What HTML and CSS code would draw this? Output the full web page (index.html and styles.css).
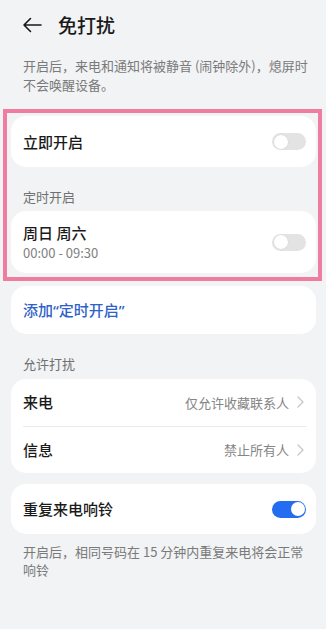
FILE: index.html
```html
<!DOCTYPE html>
<html lang="zh-CN">
<head>
<meta charset="utf-8">
<title>免打扰</title>
<link rel="stylesheet" href="styles.css">
</head>
<body>
<div class="page">
  <header class="header">
    <svg class="back" width="20" height="16" viewBox="0 0 20 16"><path d="M19 8H2M8.5 1.5L2 8l6.5 6.5" fill="none" stroke="#1a1a1a" stroke-width="1.6" stroke-linecap="round" stroke-linejoin="round"/></svg>
    <h1 class="title">免打扰</h1>
  </header>
  <p class="desc">开启后，来电和通知将被静音 (闹钟除外)，熄屏时不会唤醒设备。</p>

  <section class="highlight">
    <div class="card row row-single">
      <span class="row-title">立即开启</span>
      <span class="toggle"></span>
    </div>
    <div class="label">定时开启</div>
    <div class="card row row-double">
      <div class="row-text">
        <span class="row-title">周日 周六</span>
        <span class="row-sub">00:00 - 09:30</span>
      </div>
      <span class="toggle"></span>
    </div>
  </section>

  <div class="card row row-link">
    <span class="link">添加“定时开启”</span>
  </div>

  <div class="label">允许打扰</div>
  <div class="card list">
    <div class="row row-item">
      <span class="row-title">来电</span>
      <span class="value">仅允许收藏联系人<svg class="chev" width="7" height="12" viewBox="0 0 7 12"><path d="M1 1l5 5-5 5" fill="none" stroke="#c4c4c4" stroke-width="1.2" stroke-linecap="round" stroke-linejoin="round"/></svg></span>
    </div>
    <div class="divider"></div>
    <div class="row row-item">
      <span class="row-title">信息</span>
      <span class="value">禁止所有人<svg class="chev" width="7" height="12" viewBox="0 0 7 12"><path d="M1 1l5 5-5 5" fill="none" stroke="#c4c4c4" stroke-width="1.2" stroke-linecap="round" stroke-linejoin="round"/></svg></span>
    </div>
  </div>

  <div class="card row row-repeat">
    <span class="row-title">重复来电响铃</span>
    <span class="toggle on"></span>
  </div>
  <p class="note">开启后，相同号码在 15 分钟内重复来电将会正常响铃</p>
</div>
</body>
</html>
```
FILE: styles.css
```css
* { box-sizing: border-box; }
html, body {
  margin: 0;
  padding: 0;
  background: #f1f3f5;
}
body {
  font-family: "Noto Sans CJK SC", "Noto Sans", sans-serif;
  color: #1a1a1a;
  width: 326px;
  height: 629px;
  overflow: hidden;
}
.page {
  display: flex;
  flex-direction: column;
}
.header {
  height: 50px;
  display: flex;
  align-items: center;
  padding-left: 22px;
}
.back { display: block; }
.title {
  margin: 0 0 0 16px;
  font-size: 19px;
  font-weight: 500;
  line-height: 26px;
}
.desc {
  margin: 6px 0 0;
  padding: 0 12px 0 23px;
  font-size: 13px;
  line-height: 19px;
  color: #7a7a7a;
}
.highlight {
  margin: 15px 4px 0 3px;
  border: 4px solid #ef7d9f;
  padding: 3px 2px 4px 4px;
  display: flex;
  flex-direction: column;
}
.card {
  background: #fff;
  border-radius: 15px;
}
.page > .card { margin-left: 11px; margin-right: 10px; }
.row {
  display: flex;
  align-items: center;
  justify-content: space-between;
  padding: 0 10px 0 12px;
}
.row-title {
  font-size: 15px;
  font-weight: 500;
  line-height: 20px;
  color: #1a1a1a;
}
.row-single { height: 51px; }
.row-double { height: 62px; }
.row-text {
  display: flex;
  flex-direction: column;
}
.row-sub {
  font-size: 13px;
  line-height: 18px;
  color: #808080;
  margin-top: 1px;
}
.label {
  font-size: 13px;
  line-height: 18px;
  color: #707070;
  padding: 21px 0 5px 12px;
}
.page > .label { padding: 21px 0 6px 23px; }
.row-link { margin-top: 5px; height: 48px; }
.link {
  font-family: "Noto Sans", "Noto Sans CJK SC", sans-serif;
  font-size: 15px;
  font-weight: 500;
  line-height: 20px;
  color: #2f62c8;
}
.list {
  display: flex;
  flex-direction: column;
}
.row-item { height: 46.5px; padding-right: 12px; }
.divider {
  height: 1px;
  background: #ececec;
  margin: 0 9px 0 12px;
}
.value {
  display: flex;
  align-items: center;
  gap: 8px;
  font-size: 13px;
  color: #858585;
}
.chev { display: block; }
.row-repeat { margin-top: 11px; height: 50px; }
.note {
  margin: 9px 0 0;
  padding: 0 12px 0 23px;
  font-size: 13px;
  line-height: 18px;
  color: #7a7a7a;
}
.toggle {
  position: relative;
  width: 34px;
  height: 17px;
  border-radius: 9px;
  background: #e3e3e3;
  flex: none;
}
.toggle::after {
  content: "";
  position: absolute;
  left: 1.5px;
  top: 1.5px;
  width: 14px;
  height: 14px;
  border-radius: 50%;
  background: #fff;
  box-shadow: 0 0 0 0.5px #d6d6d6;
}
.toggle.on { background: #246cf0; }
.toggle.on::after { left: auto; right: 1.5px; box-shadow: none; }
```
